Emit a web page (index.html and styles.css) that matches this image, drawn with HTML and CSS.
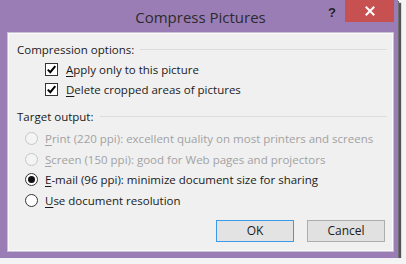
FILE: index.html
```html
<!DOCTYPE html>
<html>
<head>
<meta charset="utf-8">
<link rel="stylesheet" href="styles.css">
</head>
<body>
<div class="window">
  <div class="titlebar">
    <div class="spacer"></div>
    <div class="title">Compress Pictures</div>
    <div class="controls">
      <span class="help">?</span>
      <span class="close">
        <svg width="10" height="10" viewBox="0 0 10 10"><path d="M1.5 1.5 L8.5 8.5 M8.5 1.5 L1.5 8.5" stroke="#fff" stroke-width="2" stroke-linecap="square"/></svg>
      </span>
    </div>
  </div>
  <div class="panel">
    <div class="group-head"><span>Compression options:</span><i class="rule"></i></div>
    <div class="checks">
      <label class="row"><span class="box"><svg width="11" height="11" viewBox="0 0 11 11"><path d="M1.8 5.6 L4.3 8.2 L9.3 2.2" fill="none" stroke="#000" stroke-width="2"/></svg></span><span><u>A</u>pply only to this picture</span></label>
      <label class="row"><span class="box"><svg width="11" height="11" viewBox="0 0 11 11"><path d="M1.8 5.6 L4.3 8.2 L9.3 2.2" fill="none" stroke="#000" stroke-width="2"/></svg></span><span><u>D</u>elete cropped areas of pictures</span></label>
    </div>
    <div class="group-head second"><span>Target output:</span><i class="rule"></i></div>
    <div class="radios">
      <div class="row disabled"><span class="radio"></span><span><u>P</u>rint (220 ppi): excellent quality on most printers and screens</span></div>
      <div class="row disabled"><span class="radio"></span><span><u>S</u>creen (150 ppi): good for Web pages and projectors</span></div>
      <div class="row"><span class="radio on"></span><span><u>E</u>-mail (96 ppi): minimize document size for sharing</span></div>
      <div class="row"><span class="radio"></span><span><u>U</u>se document resolution</span></div>
    </div>
    <div class="buttons">
      <button class="btn default">OK</button>
      <button class="btn">Cancel</button>
    </div>
  </div>
</div>
</body>
</html>
```
FILE: styles.css
```css
html, body {
  margin: 0;
  padding: 0;
  background: #f4f4f4;
}
body {
  font-family: "Open Sans", "Noto Sans", sans-serif;
}
.window {
  width: 398px;
  height: 258px;
  background: #9b7db5;
  box-shadow: 1px 1px 0 #6e6e6e, 3px 3px 1px #555;
  display: flex;
  flex-direction: column;
  box-sizing: border-box;
}
.titlebar {
  height: 33px;
  display: grid;
  grid-template-columns: 1fr auto 1fr;
  align-items: start;
}
.title {
  font-size: 15px;
  color: #2b2b2b;
  line-height: 20px;
  padding-top: 7px;
  padding-left: 3px;
}
.controls {
  display: flex;
  justify-content: flex-end;
  align-items: flex-start;
  padding-right: 4px;
}
.help {
  font-family: "Liberation Sans", sans-serif;
  font-weight: bold;
  font-size: 13px;
  color: #222;
  line-height: 16px;
  margin-top: 5px;
  margin-right: 9px;
}
.close {
  width: 49px;
  height: 22px;
  background: #c75050;
  display: flex;
  align-items: center;
  justify-content: center;
}
.panel {
  flex: 1;
  margin: 0 5px 7px 8px;
  background: #f0f0f0;
  border: 1px solid #fafafa;
  outline: 1px solid #c9c0d1;
  display: flex;
  flex-direction: column;
  padding: 5px 5px 0 8px;
  font-size: 11.5px;
  color: #1a1a1a;
}
.group-head {
  display: flex;
  align-items: center;
  gap: 6px;
  height: 20px;
}
.group-head.second {
  margin-top: 7px;
}
.rule {
  flex: 1;
  height: 1px;
  background: #dcdcdc;
  margin-top: 1px;
}
.checks {
  display: flex;
  flex-direction: column;
  padding-left: 28px;
  margin-top: 0;
}
.radios {
  display: flex;
  flex-direction: column;
  padding-left: 8px;
  margin-top: 2px;
}
.row {
  display: flex;
  align-items: center;
  height: 20px;
  gap: 8px;
  white-space: nowrap;
}
.radios .row { height: 20.7px; gap: 7px; }
.row u { text-decoration-thickness: 1px; text-underline-offset: 2px; }
.box {
  width: 11px;
  height: 11px;
  border: 1px solid #333;
  background: #fff;
  display: flex;
  align-items: center;
  justify-content: center;
  flex: none;
}
.radio {
  width: 11px;
  height: 11px;
  border: 1px solid #333;
  border-radius: 50%;
  background: #fff;
  display: flex;
  align-items: center;
  justify-content: center;
  flex: none;
}
.radio.on::after {
  content: "";
  width: 7px;
  height: 7px;
  border-radius: 50%;
  background: #111;
}
.disabled { color: #a2a2a2; }
.disabled .radio {
  border-color: #c6c6c6;
  background: #f4f4f4;
}
.buttons {
  margin-top: auto;
  margin-bottom: 8px;
  display: flex;
  justify-content: flex-end;
  gap: 13px;
  padding-right: 2px;
}
.btn {
  width: 78px;
  height: 22px;
  font-family: inherit;
  font-size: 12px;
  color: #1a1a1a;
  background: #e1e1e1;
  border: 1px solid #adadad;
  padding: 0;
  line-height: 18px;
}
.btn.default {
  border-color: #3c9ae8;
  background: #e3e3e3;
}
```
